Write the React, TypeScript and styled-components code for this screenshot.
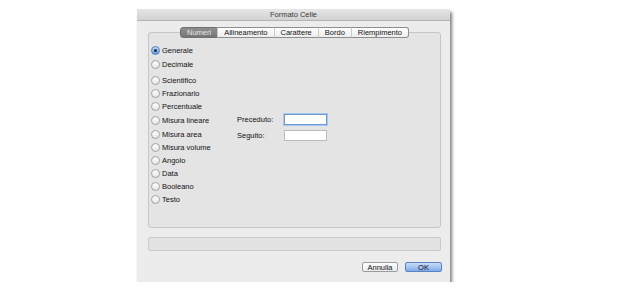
import styled, { createGlobalStyle } from 'styled-components'

const GlobalStyle = createGlobalStyle`
    body {
        margin: 0;
        background: #ffffff;
        font-family: "Liberation Sans", Arial, sans-serif;
    }
`

const formats = [
    { label: 'Generale', top: 0, checked: true },
    { label: 'Decimale', top: 1 },
    { label: 'Scientifico', top: 3 },
    { label: 'Frazionario', top: 0 },
    { label: 'Percentuale', top: 0 },
    { label: 'Misura lineare', top: 1 },
    { label: 'Misura area', top: 1 },
    { label: 'Misura volume', top: 0 },
    { label: 'Angolo', top: 0 },
    { label: 'Data', top: 0 },
    { label: 'Booleano', top: 0 },
    { label: 'Testo', top: 0 },
]

const tabs = ['Numeri', 'Allineamento', 'Carattere', 'Bordo', 'Riempimento']

const App = () => {
    return (
        <Page>
            <GlobalStyle />
            <Window>
                <TitleBar>Formato Celle</TitleBar>
                <Body>
                    <Tabs>
                        {tabs.map((t, i) => (
                            <Tab key={t} $active={i === 0} $first={i === 0} $last={i === tabs.length - 1}>
                                {t}
                            </Tab>
                        ))}
                    </Tabs>
                    <TabBox>
                        <Columns>
                            <RadioList>
                                {formats.map(f => (
                                    <RadioRow key={f.label} $top={f.top}>
                                        <Radio $checked={!!f.checked} />
                                        <span>{f.label}</span>
                                    </RadioRow>
                                ))}
                            </RadioList>
                            <Fields>
                                <FieldRow>
                                    <FieldLabel>Preceduto:</FieldLabel>
                                    <TextBox $focused />
                                </FieldRow>
                                <FieldRow>
                                    <FieldLabel>Seguito:</FieldLabel>
                                    <TextBox />
                                </FieldRow>
                            </Fields>
                        </Columns>
                    </TabBox>
                    <StatusBar />
                    <Buttons>
                        <Button>Annulla</Button>
                        <Button $primary>OK</Button>
                    </Buttons>
                </Body>
            </Window>
        </Page>
    )
}

const Page = styled.div`
    padding: 9px 0 0 137px;
`

const Window = styled.div`
    width: 313px;
    height: 273px;
    background: #ececec;
    box-shadow: 2px 3px 3px rgba(0, 0, 0, 0.5);
    display: flex;
    flex-direction: column;
    color: #111111;
    font-size: 7.5px;
`

const TitleBar = styled.div`
    height: 11px;
    line-height: 11px;
    text-align: center;
    color: #3a3a3a;
    background: linear-gradient(#e6e6e6, #d2d2d2);
    border-bottom: 1px solid #b4b4b4;
`

const Body = styled.div`
    padding: 6px 9px 0 11px;
    display: flex;
    flex-direction: column;
`

const Tabs = styled.div`
    display: flex;
    justify-content: center;
    height: 11px;
    margin-bottom: -6px;
    position: relative;
    z-index: 1;
`

const Tab = styled.div<{ $active?: boolean; $first?: boolean; $last?: boolean }>`
    height: 11px;
    line-height: 10px;
    padding: 0 6px;
    box-sizing: border-box;
    border: 1px solid #8d8d8d;
    border-left: ${p => (p.$first ? '1px solid #8d8d8d' : '1px solid #c9c9c9')};
    border-radius: ${p => (p.$first ? '3px 0 0 3px' : p.$last ? '0 3px 3px 0' : '0')};
    background: ${p => (p.$active ? 'linear-gradient(#8e8e8e, #767676)' : 'linear-gradient(#ffffff, #ededed)')};
    color: ${p => (p.$active ? '#e8e8e8' : '#111111')};
    ${p => p.$active && 'border-color: #6f6f6f;'}
    & + & {
        margin-left: -1px;
    }
`

const TabBox = styled.div`
    height: 196px;
    box-sizing: border-box;
    border: 1px solid #c6c6c6;
    border-radius: 3px;
    background: #e4e4e4;
    padding: 11px 0 0 2px;
`

const Columns = styled.div`
    display: flex;
`

const RadioList = styled.div`
    width: 86px;
    display: flex;
    flex-direction: column;
`

const RadioRow = styled.div<{ $top: number }>`
    height: 13px;
    margin-top: ${p => p.$top}px;
    display: flex;
    align-items: center;
    gap: 2px;
    white-space: nowrap;
`

const Radio = styled.span<{ $checked: boolean }>`
    width: 9px;
    height: 9px;
    box-sizing: border-box;
    border-radius: 50%;
    flex: none;
    display: flex;
    align-items: center;
    justify-content: center;
    border: 1px solid ${p => (p.$checked ? '#4d7cc0' : '#a2a2a2')};
    background: ${p => (p.$checked ? 'linear-gradient(#c3daf6, #6a9ce2)' : 'linear-gradient(#ffffff, #e6e6e6)')};
    &::after {
        content: '';
        width: 3px;
        height: 3px;
        border-radius: 50%;
        background: #17243a;
        display: ${p => (p.$checked ? 'block' : 'none')};
    }
`

const Fields = styled.div`
    display: flex;
    flex-direction: column;
    gap: 5px;
    padding-top: 70px;
`

const FieldRow = styled.div`
    display: flex;
    align-items: center;
    height: 11px;
`

const FieldLabel = styled.span`
    width: 47px;
`

const TextBox = styled.div<{ $focused?: boolean }>`
    width: 43px;
    height: 11px;
    box-sizing: border-box;
    background: #ffffff;
    border: 1px solid ${p => (p.$focused ? '#6d97d6' : '#bcbcbc')};
    ${p => p.$focused && 'box-shadow: 0 0 0 1px #a9c8f0;'}
`

const StatusBar = styled.div`
    margin-top: 9px;
    height: 14px;
    box-sizing: border-box;
    border: 1px solid #cbcbcb;
    border-radius: 2px;
    background: #e2e2e2;
`

const Buttons = styled.div`
    margin-top: 11px;
    margin-right: -1px;
    display: flex;
    justify-content: flex-end;
    gap: 7px;
`

const Button = styled.div<{ $primary?: boolean }>`
    width: ${p => (p.$primary ? '37px' : '36px')};
    height: 10px;
    line-height: 9px;
    box-sizing: border-box;
    text-align: center;
    border-radius: 2px;
    border: 1px solid ${p => (p.$primary ? '#5a83c2' : '#9c9c9c')};
    background: ${p => (p.$primary ? 'linear-gradient(#c9ddf7, #7fabea)' : 'linear-gradient(#ffffff, #ececec)')};
`

export default App
